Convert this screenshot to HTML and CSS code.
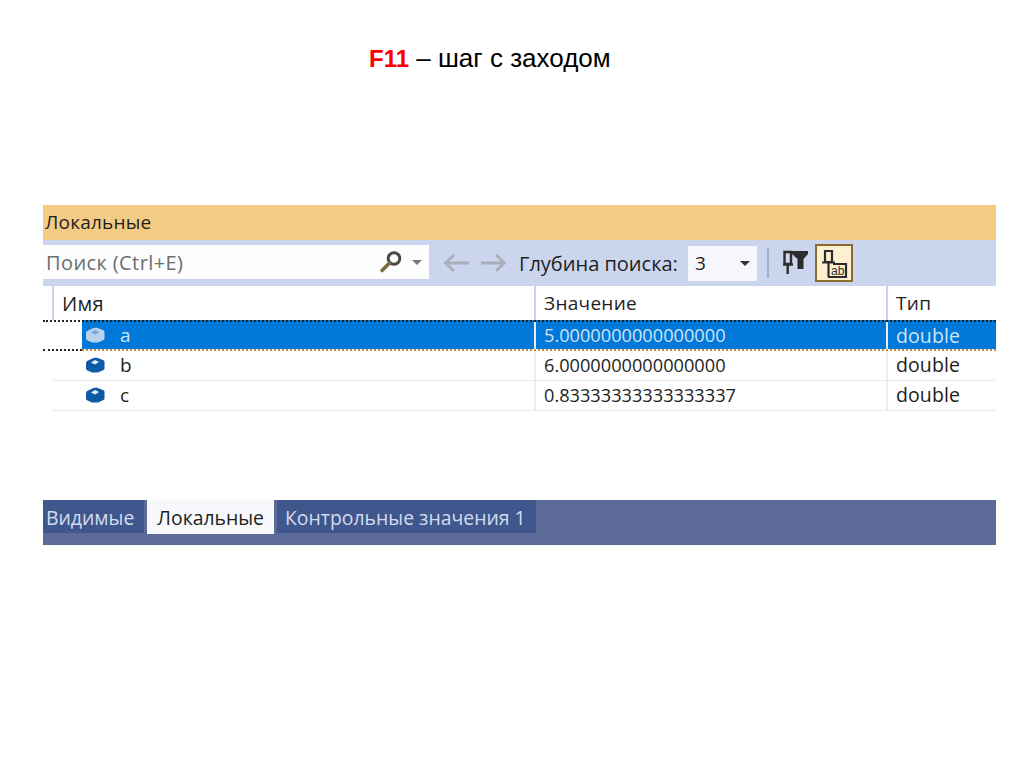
FILE: index.html
```html
<!DOCTYPE html>
<html>
<head>
	<meta charset="utf-8">
	<title>F11</title>
	<link rel="stylesheet" href="styles.css">
</head>
<body>
	<h1 class="slide-title"><b>F11</b> – шаг с заходом</h1>

	<section class="panel">
		<div class="panel-title">Локальные</div>

		<div class="toolbar">
			<div class="search">
				<span class="search-text">Поиск (Ctrl+E)</span>
				<svg class="ico-search" viewBox="0 0 24 24"><circle cx="15" cy="8.500" r="5.800" fill="none" stroke="#4a4a4a" stroke-width="3"/><path d="M10.500 13 3 20.500" stroke="#7d6a45" stroke-width="3.600" stroke-linecap="round"/></svg>
				<span class="caret caret-grey"></span>
			</div>
			<svg class="ico-arrow" viewBox="0 0 28 22"><path d="M27 11H4M12 3 3.500 11 12 19" fill="none" stroke="#a9aeb8" stroke-width="2.800"/></svg>
			<svg class="ico-arrow" viewBox="0 0 28 22"><path d="M1 11H24M16 3 24.500 11 16 19" fill="none" stroke="#a9aeb8" stroke-width="2.800"/></svg>
			<span class="depth-label">Глубина поиска:</span>
			<div class="depth">
				<span>3</span>
				<span class="caret"></span>
			</div>
			<span class="sep"></span>
			<svg class="ico-pin" viewBox="0 0 26 26"><path d="M1.500 2h6.500v12H1.500zM4.700 14v10M0 14.500h10" fill="none" stroke="#2c2c2c" stroke-width="2.400"/><path d="M9 1h16v3l-4.500 5v10h-6V9L9 4z" fill="#2c2c2c"/></svg>
			<button class="btn-tab">
				<svg viewBox="2 2 34 34"><path d="M10 7h7v11h-7zM13.500 18v15M7 18.500h13M18 20h13v13H13" fill="none" stroke="#2c2c2c" stroke-width="2.200"/><text x="16" y="31" class="ico-ab">ab</text></svg>
			</button>
		</div>

		<div class="grid">
			<div class="row head">
				<div class="cell name">Имя</div>
				<div class="cell value">Значение</div>
				<div class="cell type">Тип</div>
			</div>
			<div class="row selected">
				<div class="cell name">
					<svg class="ico-var" viewBox="0 0 20 16"><path d="M1 6Q1 4 3 3.500L9 .8h3L18 3q1.500 .6 1.500 2v6.500q0 1-1.500 1.800L13 15.500H7L2 13.300Q1 12.800 1 11.500z" fill="#b9d3ee"/><path d="M6 5.500 10 3l4 2-4 2.500z" fill="#6ea6dd"/></svg>
					<span>a</span>
				</div>
				<div class="cell value">5.0000000000000000</div>
				<div class="cell type">double</div>
			</div>
			<div class="row">
				<div class="cell name">
					<svg class="ico-var" viewBox="0 0 20 16"><path d="M1 6Q1 4 3 3.500L9 .8h3L18 3q1.500 .6 1.500 2v6.500q0 1-1.500 1.800L13 15.500H7L2 13.300Q1 12.800 1 11.500z" fill="#0e5aa7"/><path d="M6 5.500 10 3l4 2-4 2.500z" fill="#e3eef9"/></svg>
					<span>b</span>
				</div>
				<div class="cell value">6.0000000000000000</div>
				<div class="cell type">double</div>
			</div>
			<div class="row">
				<div class="cell name">
					<svg class="ico-var" viewBox="0 0 20 16"><path d="M1 6Q1 4 3 3.500L9 .8h3L18 3q1.500 .6 1.500 2v6.500q0 1-1.500 1.800L13 15.500H7L2 13.300Q1 12.800 1 11.500z" fill="#0e5aa7"/><path d="M6 5.500 10 3l4 2-4 2.500z" fill="#e3eef9"/></svg>
					<span>c</span>
				</div>
				<div class="cell value">0.83333333333333337</div>
				<div class="cell type">double</div>
			</div>
		</div>
	</section>

	<nav class="tabs">
		<span class="tab first">Видимые</span>
		<span class="tab active">Локальные</span>
		<span class="tab last">Контрольные значения 1</span>
	</nav>
</body>
</html>
```

FILE: styles.css
```css
* {
	margin: 0;
	padding: 0;
	box-sizing: border-box;
}
html, body {
	height: 767px;
	overflow: hidden;
}
body {
	background: white;
	font-family: "Open Sans", "Noto Sans", sans-serif;
	font-size: 19px;
	letter-spacing: .2px;
	color: #1e1e1e;
	padding: 0 28px 0 43px;
}
.slide-title {
	font-family: "Liberation Sans", Arial, sans-serif;
	font-size: 26px;
	font-weight: normal;
	letter-spacing: 0;
	line-height: 28px;
	color: black;
	padding: 44px 0 0 326px;
	height: 205px;
}
.slide-title b {
	font-size: 24px;
	color: #f00;
}
.panel-title {
	height: 35px;
	line-height: 35px;
	background: #f3cb84;
	padding-left: 2px;
}
.toolbar {
	display: flex;
	align-items: center;
	height: 46px;
	background: #ccd5ee;
}
.search {
	display: flex;
	align-items: center;
	width: 386px;
	height: 34px;
	margin-bottom: 2px;
	background: #fdfdfe;
	padding-left: 3px;
	margin-right: 13px;
}
.search-text {
	color: #6d6d6d;
	font-size: 20px;
	letter-spacing: .4px;
	flex: 1;
}
.ico-search {
	width: 24px;
	height: 24px;
	margin-right: 9px;
}
.caret {
	width: 0;
	height: 0;
	border-left: 5px solid transparent;
	border-right: 5px solid transparent;
	border-top: 5px solid #333;
}
.caret-grey {
	border-top-color: #777;
	margin-right: 7px;
}
.ico-arrow {
	width: 28px;
	height: 22px;
	margin-right: 10px;
}
.depth-label {
	font-size: 20px;
	letter-spacing: 0;
	margin-left: 1px;
	margin-right: 10px;
}
.depth {
	display: flex;
	align-items: center;
	justify-content: space-between;
	width: 69px;
	height: 35px;
	background: #f6f7fc;
	padding: 0 7px 0 7px;
}
.sep {
	width: 2px;
	height: 30px;
	background: #a4adc4;
	margin: 0 14px 0 10px;
}
.ico-pin {
	width: 26px;
	height: 26px;
	margin-right: 6px;
}
.btn-tab {
	display: flex;
	align-items: center;
	justify-content: center;
	width: 38px;
	height: 38px;
	background: #fdf0d2;
	border: 2px solid #8a6b2d;
}
.btn-tab svg {
	width: 34px;
	height: 34px;
}
.ico-ab {
	font-family: "Liberation Sans", Arial, sans-serif;
	font-size: 12px;
	letter-spacing: 0;
	fill: #2c2c2c;
}
.row {
	display: flex;
	height: 30px;
	margin-left: 9px;
	border-bottom: 1px solid #e9e9ee;
}
.cell {
	display: flex;
	align-items: center;
	padding-left: 8px;
	padding-bottom: 2px;
	border-left: 2px solid #edeef4;
}
.name {
	width: 482px;
	border-left: 0;
	padding-left: 33px;
	gap: 15px;
}
.value {
	width: 352px;
	font-size: 18.200px;
	letter-spacing: 0;
}
.type {
	flex: 1;
	font-size: 19.500px;
	letter-spacing: .1px;
}
.head {
	height: 34px;
	border-bottom: 0;
}
.head .cell {
	border-left-color: #c9d2ea;
	font-size: 19px;
	letter-spacing: .3px;
	padding-bottom: 0;
}
.head .name {
	width: 482px;
	padding-left: 8px;
	border-left: 2px solid #c9d2ea;
	font-size: 20px;
}
.selected {
	position: relative;
	margin-left: 0;
	height: 31px;
	background: linear-gradient(#0078d7, #0078d7) no-repeat 39px 0;
	color: #cfe4f8;
	border-bottom: 2px dotted #c98a45;
}
.selected .cell {
	border-left-color: #e6eef8;
	padding-top: 1px;
	padding-bottom: 0;
}
.selected .name {
	width: 491px;
	padding-left: 42px;
	border-left: 0;
}
.selected::before,
.selected::after {
	content: "";
	position: absolute;
	left: 0;
	border-top: 2px dotted #222;
}
.selected::before {
	top: 0;
	right: 0;
}
.selected::after {
	bottom: -2px;
	width: 39px;
	background: white;
}
.ico-var {
	width: 20px;
	height: 16px;
}
.tabs {
	display: flex;
	align-items: flex-start;
	height: 45px;
	margin-top: 89px;
	background: #5d6b98;
}
.tab {
	height: 33px;
	line-height: 35px;
	background: #3f578d;
	color: #d3dcef;
	padding: 0 10px;
	margin-right: 3px;
	font-size: 19.400px;
	letter-spacing: 0;
}
.tab.first {
	padding: 0 10px 0 3px;
}
.tab.active {
	height: 34px;
	background: #f7f8fc;
	color: #1e1e1e;
}
.tab.last {
	padding: 0 10px 0 8px;
}
```
